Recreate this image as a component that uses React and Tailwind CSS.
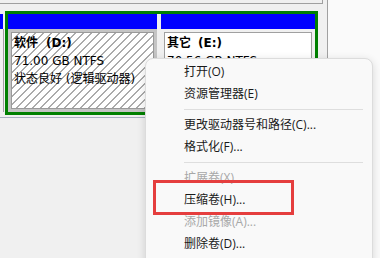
export default function App() {
  const disk = "font-['DejaVu_Sans','Noto_Sans_CJK_SC',sans-serif] text-[12px] leading-[18px] text-black";
  const menuFont = "font-['Open_Sans','Noto_Sans_CJK_SC',sans-serif] text-[12px]";
  const items = [
    { t: "打开(O)" },
    { t: "资源管理器(E)" },
    { sep: true },
    { t: "更改驱动器号和路径(C)..." },
    { t: "格式化(F)..." },
    { sep: true },
    { t: "扩展卷(X)", dis: true },
    { t: "压缩卷(H)..." },
    { t: "添加镜像(A)...", dis: true },
    { t: "删除卷(D)..." },
  ];
  return (
    <div className="relative w-[380px] h-[258px] overflow-hidden bg-[#fafafa] flex">
      <div className="w-[328px] h-full bg-[#f0f0f0] border-r border-[#a0a0a0] flex flex-col">
        <div className="h-[4px] w-[323px] border-b border-r border-[#a0a0a0]" />
        <div className="h-[114px] border-b border-[#a8b0c0] flex items-start">
          <div className="mt-[10px] h-[98px] w-[4px] flex flex-col">
            <div className="h-[15px] w-[3px] bg-[#0000ff]" />
            <div className="flex-1 border-r border-[#a0a0a0]" />
          </div>
          <div className="ml-[1px] mt-[7px] w-[313px] h-[104px] border-[3px] border-[#008000] bg-[#f0f0f0] flex gap-[4px]">
            <div className="w-[149px] flex flex-col">
              <div className="h-[15px] bg-[#0000ff]" />
              <div className="flex-1 bg-[#c4c4c4] p-[3px] flex">
                <div className={`flex-1 border border-[#9a9a9a] pl-[2px] pt-[1px] [background-image:repeating-linear-gradient(135deg,#ffffff_0px,#ffffff_4.6px,#ababab_4.6px,#ababab_5.66px)] ${disk}`}>
                  <div className="font-bold whitespace-nowrap">软件<span className="ml-[8px]">(D:)</span></div>
                  <div className="whitespace-nowrap">71.00 GB NTFS</div>
                  <div className="whitespace-nowrap">状态良好 (逻辑驱动器)</div>
                </div>
              </div>
            </div>
            <div className="flex-1 flex flex-col">
              <div className="h-[15px] bg-[#0000ff]" />
              <div className="flex-1 bg-[#f0f0f0] p-[3px] flex">
                <div className={`flex-1 bg-white border border-[#a0a0a0] pl-[2px] pt-[1px] ${disk}`}>
                  <div className="font-bold whitespace-nowrap">其它<span className="ml-[7px]">(E:)</span></div>
                  <div className="whitespace-nowrap">70.56 GB NTFS</div>
                  <div className="whitespace-nowrap">状态良好 (逻辑驱动器)</div>
                </div>
              </div>
            </div>
          </div>
        </div>
      </div>

      <div className={`absolute left-[145px] top-[58px] w-[228px] h-[230px] rounded-[8px] border border-[#dcdcdc] bg-[#f9f9f9] shadow-[0_2px_8px_rgba(0,0,0,0.14)] pt-[2px] ${menuFont}`}>
        {items.map((it, i) =>
          it.sep ? (
            <div key={i} className="h-[9px] flex items-center pl-[38px] pr-[9px]">
              <div className="h-px w-full bg-[#dedede]" />
            </div>
          ) : (
            <div key={i} className={`h-[22px] flex items-center pl-[38px] whitespace-nowrap ${it.dis ? "text-[#a8a8a8]" : "text-[#1a1a1a]"}`}>
              {it.t}
            </div>
          )
        )}
      </div>

      <div className="absolute left-[153px] top-[180px] w-[141px] h-[35px] border-[3px] border-[#e53e3e]" />
    </div>
  );
}
